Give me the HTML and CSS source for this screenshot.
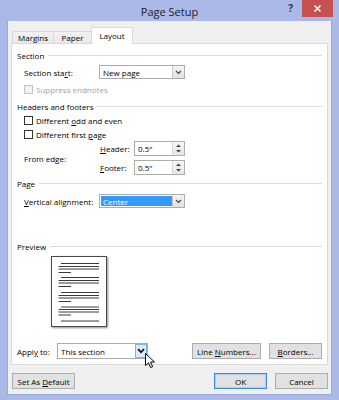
FILE: index.html
```html
<!DOCTYPE html>
<html>
<head>
<meta charset="utf-8">
<title>Page Setup</title>
<link rel="stylesheet" href="styles.css">
</head>
<body>
<div class="frame">
  <div class="titlebar">
    <div></div>
    <div class="title">Page Setup</div>
    <div class="controls">
      <span class="help">?</span>
      <span class="close"><svg width="9" height="9" viewBox="0 0 9 9"><path d="M1.5 1.5 L7.5 7.5 M7.5 1.5 L1.5 7.5" stroke="#fff" stroke-width="1.6" fill="none"/></svg></span>
    </div>
  </div>
  <div class="dialog">
    <div class="tabs">
      <div class="tab t-margins">Margins</div>
      <div class="tab t-paper">Paper</div>
      <div class="tab active">Layout</div>
    </div>
    <div class="panel">
      <div class="group-title"><span>Section</span><i class="rule"></i></div>
      <div class="row r-start">
        <span class="lbl">Section sta<u>r</u>t:</span>
        <div class="select"><span class="val">New page</span><span class="drop"><svg width="7" height="5" viewBox="0 0 7 5"><path d="M1 1 L3.5 3.5 L6 1" stroke="#444" stroke-width="1.2" fill="none"/></svg></span></div>
      </div>
      <div class="row r-suppress">
        <span class="check disabled"></span><span class="ctext disabled-text">Suppress endnotes</span>
      </div>
      <div class="group-title g-hf"><span>Headers and footers</span><i class="rule"></i></div>
      <div class="row r-odd">
        <span class="check"></span><span class="ctext">Different <u>o</u>dd and even</span>
      </div>
      <div class="row r-first">
        <span class="check"></span><span class="ctext">Different first <u>p</u>age</span>
      </div>
      <div class="edge">
        <span class="lbl edge-lbl">From edge:</span>
        <div class="edge-fields">
          <div class="spin-row">
            <span class="slbl"><u>H</u>eader:</span>
            <div class="spin"><span class="val">0.5"</span><span class="arrows"><svg width="11" height="13" viewBox="0 0 11 13"><path d="M3 5 L5.5 2.5 L8 5 Z M3 8 L5.5 10.5 L8 8 Z" fill="#444"/></svg></span></div>
          </div>
          <div class="spin-row">
            <span class="slbl"><u>F</u>ooter:</span>
            <div class="spin"><span class="val">0.5"</span><span class="arrows"><svg width="11" height="13" viewBox="0 0 11 13"><path d="M3 5 L5.5 2.5 L8 5 Z M3 8 L5.5 10.5 L8 8 Z" fill="#444"/></svg></span></div>
          </div>
        </div>
      </div>
      <div class="group-title g-page"><span>Page</span><i class="rule"></i></div>
      <div class="row r-valign">
        <span class="lbl"><u>V</u>ertical alignment:</span>
        <div class="select focused"><span class="val sel">Center</span><span class="drop"><svg width="7" height="5" viewBox="0 0 7 5"><path d="M1 1 L3.5 3.5 L6 1" stroke="#444" stroke-width="1.2" fill="none"/></svg></span></div>
      </div>
      <div class="group-title g-preview"><span>Preview</span><i class="rule"></i></div>
      <div class="preview">
        <svg width="56" height="71" viewBox="0 0 56 71">
          <g stroke="#3a3a3a" stroke-width="1">
            <path d="M10 7.5 H48 M7.5 10.5 H48 M7.5 13 H48 M7.5 16.5 H20"/>
            <path d="M10 21.5 H48 M7.5 24.5 H48 M7.5 27 H48 M7.5 30.5 H20"/>
            <path d="M10 36.5 H48 M7.5 39.5 H48 M7.5 42 H48 M7.5 45.5 H20"/>
            <path d="M10 51 H48 M7.5 53.5 H48 M7.5 56 H48 M7.5 59 H20"/>
            <path d="M10 65 H48"/>
          </g>
        </svg>
      </div>
      <div class="row r-apply">
        <span class="lbl apply-lbl">Appl<u>y</u> to:</span>
        <div class="select apply-select"><span class="val">This section</span><span class="drop hover"><svg width="8" height="6" viewBox="0 0 8 6"><path d="M1 1.2 L4 4.2 L7 1.2" stroke="#1a1a1a" stroke-width="1.8" fill="none"/></svg></span>
          <svg class="cursor" width="12" height="17" viewBox="0 0 12 17"><path d="M0.5 0.5 L0.5 12.5 L3.5 9.8 L5.6 14.6 L7.6 13.7 L5.6 9 L9.5 9 Z" fill="#fff" stroke="#000" stroke-width="1" stroke-linejoin="round"/></svg>
        </div>
        <div class="btns">
          <span class="btn b-line"><span>Line <u>N</u>umbers...</span></span>
          <span class="btn b-borders"><span><u>B</u>orders...</span></span>
        </div>
      </div>
    </div>
    <div class="bottom">
      <span class="btn b-default"><span>Set As <u>D</u>efault</span></span>
      <span class="btn b-ok"><span>OK</span></span>
      <span class="btn b-cancel"><span>Cancel</span></span>
    </div>
  </div>
</div>
</body>
</html>
```
FILE: styles.css
```css
* { box-sizing: border-box; }
html, body { margin: 0; padding: 0; }
body {
  font-family: "Open Sans", "Noto Sans", "DejaVu Sans", sans-serif;
  font-size: 8px;
  color: #000;
}
u { text-decoration: underline; text-underline-offset: 1px; }
.frame {
  width: 339px;
  height: 400px;
  background: #abb9e8;
  display: flex;
  flex-direction: column;
}
.titlebar {
  height: 21px;
  flex: none;
  display: grid;
  grid-template-columns: 1fr auto 1fr;
}
.title {
  align-self: center;
  font-size: 11px;
  color: #222;
  padding-top: 1px;
}
.controls {
  justify-self: end;
  display: flex;
  align-items: flex-start;
}
.help {
  font-size: 10px;
  font-weight: 700;
  color: #333;
  margin-right: 9px;
  line-height: 17px;
}
.close {
  width: 31px;
  height: 17px;
  margin-right: 6px;
  background: #c75050;
  display: flex;
  align-items: center;
  justify-content: center;
}
.dialog {
  flex: 1;
  margin: 0 7px 6px;
  background: #f0f0f0;
  border: 1px solid #9aa8d8;
  border-top: none;
  padding: 6px 3px 5px 3px;
  display: flex;
  flex-direction: column;
}
.tabs {
  display: flex;
  align-items: flex-end;
  height: 17px;
  padding-left: 1px;
  margin-bottom: -1px;
  position: relative;
  z-index: 1;
}
.tab {
  height: 12px;
  margin-bottom: 1px;
  border: 1px solid #d9d9d9;
  border-bottom: none;
  background: linear-gradient(#f2f2f2, #e9e9e9);
  display: flex;
  align-items: center;
  justify-content: center;
  font-size: 8px;
}
.t-margins { width: 42px; }
.t-paper { width: 39px; margin-left: -1px; }
.tab.active {
  width: 42px;
  height: 17px;
  margin-bottom: 0;
  margin-left: -1px;
  background: #fff;
  padding-bottom: 1px;
}
.panel {
  width: 317px;
  height: 322px;
  background: #fff;
  border: 1px solid #d9d9d9;
  padding: 5px 5px 5px 5px;
  display: flex;
  flex-direction: column;
}
.group-title {
  height: 12px;
  display: flex;
  align-items: center;
  gap: 4px;
}
.rule {
  flex: 1;
  height: 1px;
  background: #dcdcdc;
}
.row {
  display: flex;
  align-items: center;
  margin-left: 7px;
}
.r-start { margin-top: 4px; height: 14px; }
.r-suppress { margin-top: 4px; height: 12px; }
.g-hf { margin-top: 5px; }
.r-odd { margin-top: 2px; height: 12px; }
.r-first { margin-top: 2px; height: 12px; }
.g-page { margin-top: 2px; }
.r-valign { margin-top: 5px; height: 14px; }
.g-preview { margin-top: 32px; }
.lbl { width: 75px; flex: none; }
.select {
  width: 86px;
  height: 14px;
  border: 1px solid #acacac;
  background: #fff;
  display: flex;
  align-items: stretch;
  position: relative;
}
.select .val {
  flex: 1;
  padding-left: 3px;
  display: flex;
  align-items: center;
}
.select.focused .val.sel {
  margin: 1px 0 1px 1px;
  padding-left: 2px;
  background: #3399ff;
  color: #fff;
}
.drop {
  width: 12px;
  flex: none;
  border-left: 1px solid #c8c8c8;
  background: linear-gradient(#f4f4f4, #e2e2e2);
  display: flex;
  align-items: center;
  justify-content: center;
}
.check {
  width: 9px;
  height: 9px;
  border: 1px solid #333;
  background: #fff;
  flex: none;
}
.check.disabled { border-color: #c2c2c2; background: #f2f2f2; }
.ctext { margin-left: 3px; }
.disabled-text { color: #a2a2a2; }
.edge {
  margin-top: 1px;
  margin-left: 7px;
  height: 34px;
  display: flex;
  align-items: center;
}
.edge-lbl { width: 76px; }
.edge-fields {
  display: flex;
  flex-direction: column;
  gap: 4px;
}
.spin-row {
  display: flex;
  align-items: center;
  height: 15px;
}
.slbl { width: 34px; }
.spin {
  width: 51px;
  height: 15px;
  border: 1px solid #acacac;
  background: #fff;
  display: flex;
  align-items: stretch;
}
.spin .val {
  flex: 1;
  padding-left: 3px;
  display: flex;
  align-items: center;
}
.arrows {
  width: 12px;
  flex: none;
  display: flex;
  align-items: center;
  justify-content: center;
  background: linear-gradient(#f6f6f6, #e6e6e6);
  border-left: 1px solid #dadada;
}
.preview {
  margin-top: 4px;
  margin-left: 34px;
  width: 56px;
  height: 71px;
  border: 1px solid #4a4a4a;
  background: #fff;
  box-shadow: 1px 1px 2px rgba(0,0,0,0.45);
}
.preview svg { display: block; margin: -1px; }
.r-apply {
  margin-left: 0;
  margin-top: 16px;
  height: 16px;
}
.apply-lbl { width: 40px; }
.apply-select { width: 91px; height: 16px; }
.drop.hover {
  background: #dcecfc;
  border: 1px solid #7eb4ea;
  width: 12px;
}
.cursor {
  position: absolute;
  left: 87px;
  top: 9px;
}
.btns {
  margin-left: auto;
  display: flex;
  gap: 8px;
}
.btn {
  height: 16px;
  border: 1px solid #adadad;
  background: #e1e1e1;
  display: flex;
  align-items: center;
  justify-content: center;
  font-size: 8px;
}
.b-line { width: 69px; }
.b-borders { width: 53px; }
.bottom {
  margin-top: 8px;
  display: flex;
  gap: 8px;
  padding-left: 1px;
}
.b-default { width: 63px; margin-right: auto; }
.b-ok {
  width: 53px;
  border-color: #3c8ddb;
  box-shadow: inset 0 0 0 1px #a8d0f5;
}
.b-cancel { width: 53px; }
```
